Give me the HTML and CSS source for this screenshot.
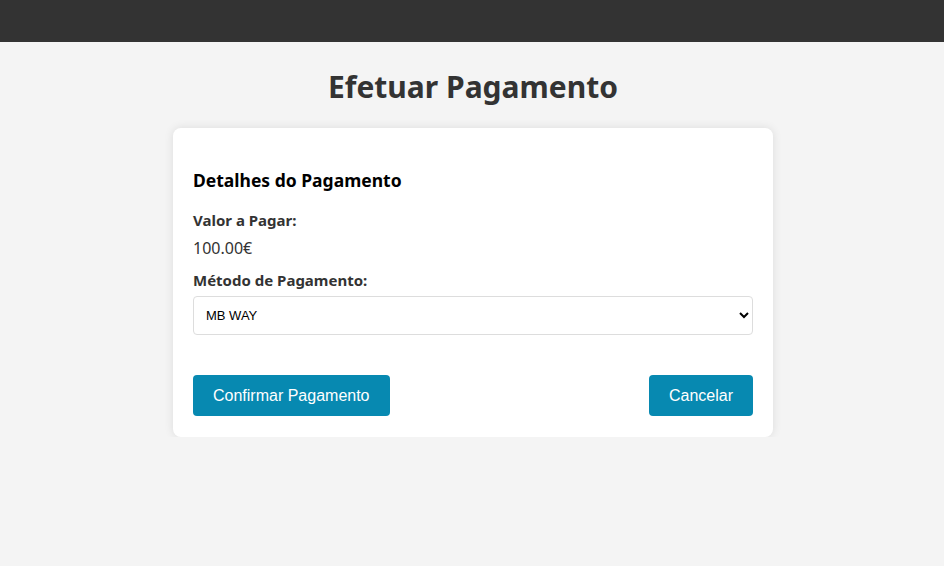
FILE: index.html
```html
<!DOCTYPE html>
<html lang="pt">
<head>
<meta charset="utf-8">
<title>Efetuar Pagamento</title>
<link rel="stylesheet" href="styles.css">
</head>
<body>
<header class="topbar"></header>
<main class="page">
  <h1 class="title">Efetuar Pagamento</h1>
  <section class="card">
    <h3 class="card-title">Detalhes do Pagamento</h3>
    <div class="field">
      <label class="label">Valor a Pagar:</label>
      <p class="value">100.00€</p>
    </div>
    <div class="field">
      <label class="label" for="metodo">Método de Pagamento:</label>
      <select id="metodo" class="select">
        <option>MB WAY</option>
        <option>Cartão de Crédito</option>
        <option>Referência Multibanco</option>
      </select>
    </div>
    <div class="actions">
      <button class="btn">Confirmar Pagamento</button>
      <button class="btn">Cancelar</button>
    </div>
  </section>
</main>
</body>
</html>
```
FILE: styles.css
```css
* { box-sizing: border-box; }
html, body { margin: 0; padding: 0; }
body {
  background: #f4f4f4;
  font-family: "Noto Sans", "Open Sans", sans-serif;
  color: #333;
}
.topbar {
  height: 42px;
  background: #333;
}
.page {
  display: flex;
  flex-direction: column;
  align-items: center;
  padding-top: 24px;
  padding-left: 2px;
}
.title {
  margin: 0 0 20px;
  font-size: 30px;
  line-height: 42px;
  font-weight: 700;
  color: #333;
}
.card {
  width: 600px;
  background: #fff;
  border-radius: 8px;
  box-shadow: 0 0 10px rgba(0,0,0,0.1);
  padding: 37px 20px 21px;
}
.card-title {
  margin: 0 0 14px;
  font-size: 17.5px;
  line-height: 30px;
  font-weight: 700;
  color: #000;
}
.field {
  display: flex;
  flex-direction: column;
  margin-bottom: 10px;
}
.label {
  font-size: 15px;
  line-height: 22px;
  font-weight: 700;
  color: #333;
}
.value {
  margin: 6px 0 0;
  font-size: 16px;
  line-height: 22px;
  color: #333;
}
.select {
  margin-top: 5px;
  height: 39px;
  width: 100%;
  border: 1px solid #ddd;
  border-radius: 4px;
  background: #fff;
  padding: 0 8px;
  font-family: "Liberation Sans", Arial, sans-serif;
  font-size: 13px;
  color: #000;
}
.actions {
  display: flex;
  justify-content: space-between;
  margin-top: 40px;
}
.btn {
  background: #0789b1;
  color: #fff;
  border: none;
  border-radius: 4px;
  height: 41px;
  padding: 0 20px;
  font-family: "Liberation Sans", Arial, sans-serif;
  font-size: 16px;
  cursor: pointer;
}
```
